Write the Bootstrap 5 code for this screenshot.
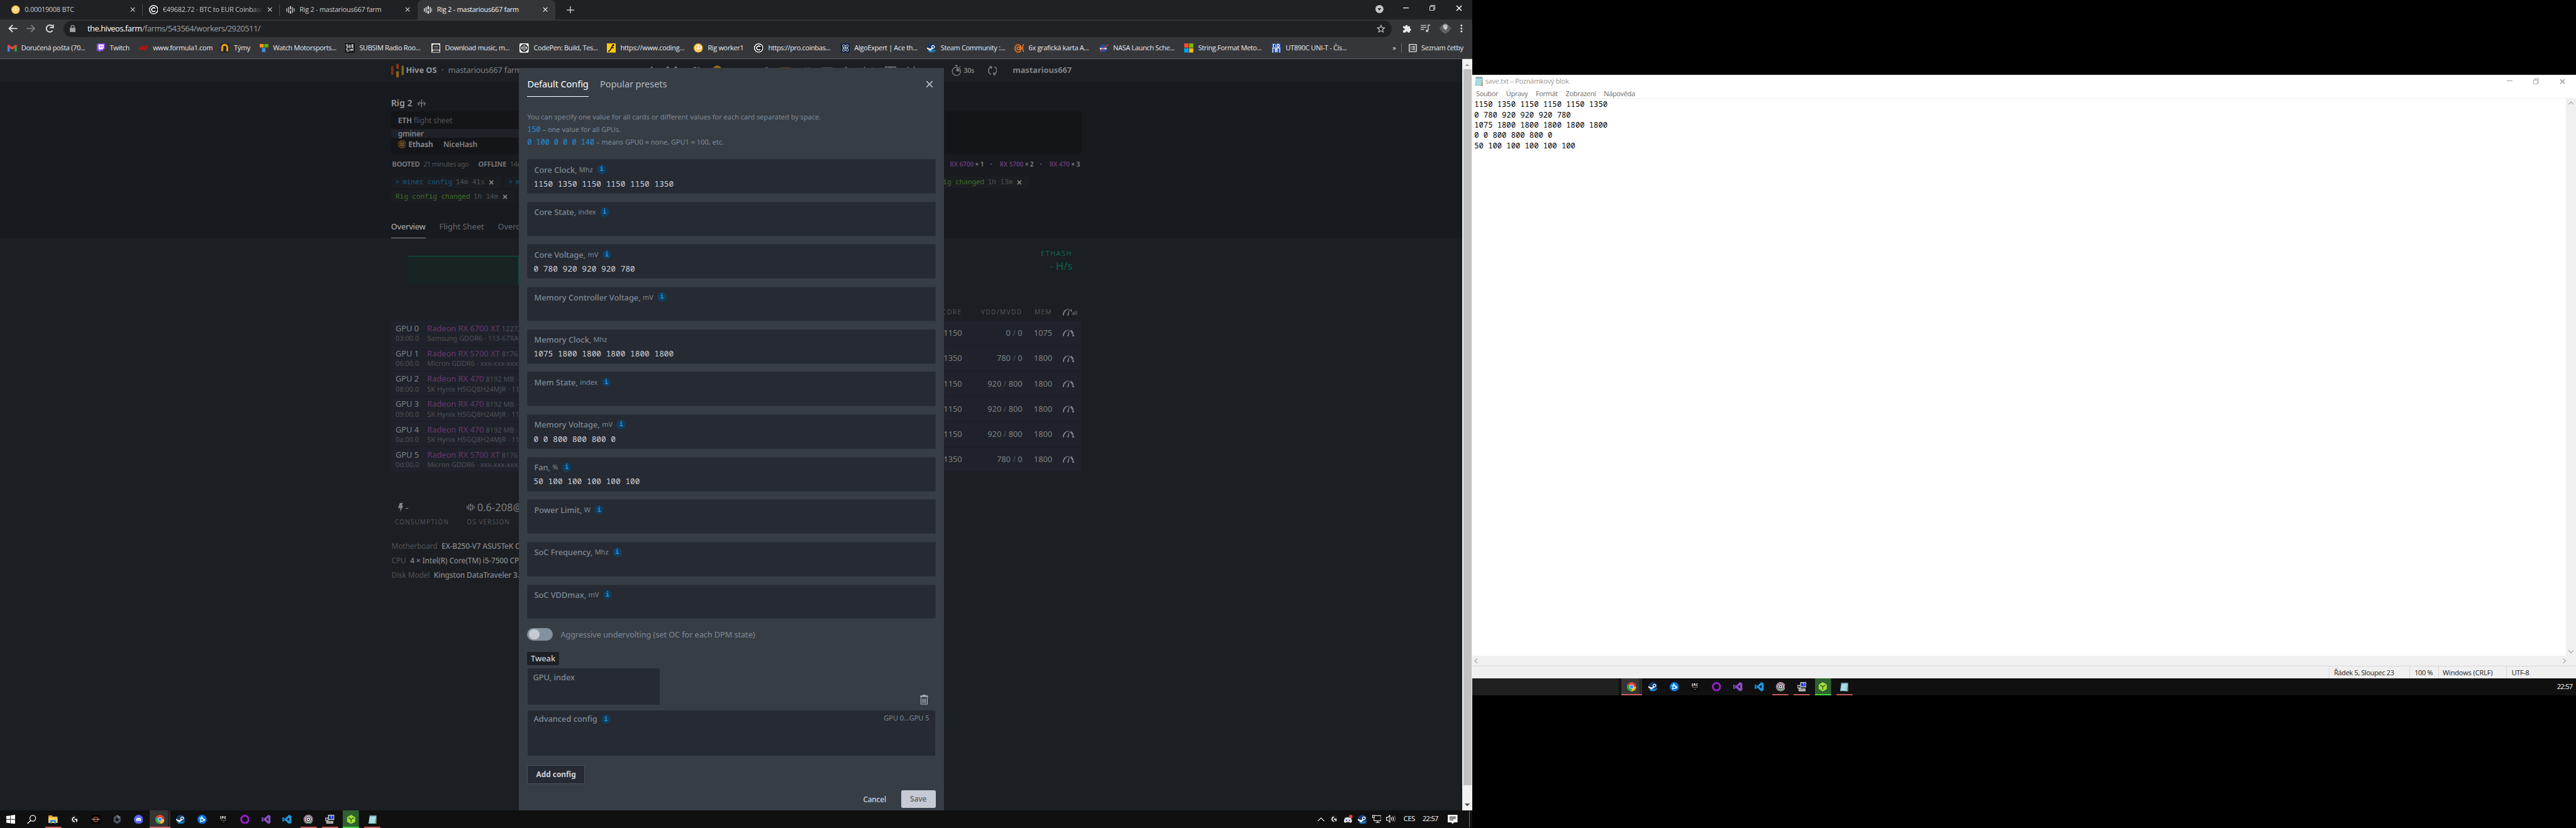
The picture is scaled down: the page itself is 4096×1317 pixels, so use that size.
<!DOCTYPE html>
<html lang="cs">
<head>
<meta charset="utf-8">
<title>Rig 2 - mastarious667 farm</title>
<link href="https://cdn.jsdelivr.net/npm/bootstrap@5.3.0/dist/css/bootstrap.min.css" rel="stylesheet">
<style>
  html, body { background: #000; overflow: hidden; }
  .desktop { zoom: .9142857; width: 4480px; height: 1440px; font: 12px/1.35 "Open Sans", sans-serif; overflow: hidden; }
  .desktop svg { display: block; flex: none; }
  .mon-left { width: 2560px; height: 1440px; }
  .mon-right { width: 1920px; height: 1080px; margin-top: 130px; }
  .seg { letter-spacing: -.3px; white-space: nowrap; }

  /* browser chrome */
  .tabstrip { height: 34px; background: #202124; color: #c6c8cb; padding-left: 9px; }
  .btab { width: 239px; padding: 0 13px 0 11px; height: 34px; position: relative; }
  .btab.sep::after { content: ""; position: absolute; right: 0; top: 8px; height: 19px; width: 1px; background: #4a4c50; }
  .btab.on { background: #35363a; color: #f1f3f4; border-radius: 8px 8px 0 0; width: 240px; }
  .btab svg.fav { margin-right: 8px; }
  .btab .ttl { flex: 1; overflow: hidden; }
  .btab .fade-end { -webkit-mask-image: linear-gradient(90deg, #000 88%, transparent); }
  .wbtn { width: 46px; height: 28px; }
  .toolbar { height: 32px; background: #35363a; color: #e8eaed; }
  .omni { width: 2310px; height: 28px; border-radius: 14px; background: #202124; font-size: 14px; letter-spacing: -.47px; padding: 0 11px 0 11px; color: #9aa0a6; }
  .omni b { font-weight: 400; color: #fff; }
  .omni .lock { margin-right: 21px; }
  .bmbar { height: 37px; background: #35363a; color: #e8eaed; border-bottom: 1px solid #5f6063; padding-left: 13px;
    display: grid; align-items: center; letter-spacing: -.36px; white-space: nowrap;
    grid-template-columns: 154px 74px 142px 69px 149px 149px 154px 151px 152px 105px 150px 150px 152px 147px 149px 152px 210px 15px 13px auto; }
  .bm { display: flex; align-items: center; gap: 8px; }
  .bmsep { width: 1px; height: 16px; background: #6b6d70; }

  /* page below the dialog */
  .page { height: 1307px; background: #1b1e22; position: relative; font-family: "Noto Sans", sans-serif; color: #7e8185; white-space: nowrap; }
  .view { width: 2543px; height: 1307px; overflow: hidden; }
  .inner { margin-left: 680px; width: 1200px; }
  .mono { font-family: "Noto Sans Mono", "DejaVu Sans Mono", monospace; }
  .hhead { height: 40px; background: #1b1e22; border-bottom: 1px solid #191b1f; font-size: 14px; }
  .hhead .tail { margin-left: auto; width: 225px; }
  .dark { height: 272px; background: #171a1e; padding-top: 27px; }
  .dim { color: #505359; }
  .lite { color: #96989b; }
  .rig { height: 20px; font-size: 15.6px; line-height: 20px; }
  .fs { margin-top: 4px; height: 75px; background: #141519; border-radius: 3px; font-size: 13px; letter-spacing: -.15px; }
  .fs > div { padding-left: 12px; }
  .fs .m { height: 16px; width: 600px; background: #1f2128; line-height: 17px; }
  .boot { height: 34px; letter-spacing: -.12px; }
  .violet { color: #66396f; }
  .chip { height: 20px; background: #1a1d21; border-radius: 2px; padding: 0 12px 0 8px; gap: 6px; font-size: 12px; display: flex; align-items: center; }
  .chip b { color: #8b8d90; font: 700 13px "DejaVu Sans", sans-serif; }
  .green { color: #456d28; } .blue { color: #1a5a85; }
  .ptabs { margin-top: 24px; height: 39px; font-size: 14px; gap: 24px; color: #66696e; }
  .ptabs span { line-height: 36px; height: 39px; }
  .ptabs .on { font-weight: 500; letter-spacing: -.3px; color: #a0a2a4; border-bottom: 2px solid #8f9193; }
  .chart { width: 192px; height: 50px; background: #182324; border-top: 1px solid #0d5449; border-right: 2px solid #0f4a42; }
  .teal { color: #0e6654; }
  .ghead { height: 30px; font-size: 11px; letter-spacing: 1.6px; color: #505359; }
  .grow { height: 44px; background: #1f222a; border-bottom: 1px solid #191b1f; font-size: 14px; padding-left: 8px; }
  .gid { width: 55px; } .gsub { font-size: 12px; line-height: 17px; color: #4d5056; }
  .gnm { line-height: 18px; }
  .cr { text-align: right; flex: none; }
  .c1 { width: 60px; } .c2 { width: 105px; } .c3 { width: 52px; } .c4 { width: 50px; padding-left: 18px; }
  .tile { height: 54px; background: #1c1f23; border-radius: 2px; width: 120px; padding-left: 7px; }
  .tile .v { font-size: 18px; line-height: 24px; height: 27px; padding-top: 7px; }
  .tile .k { font-size: 11px; letter-spacing: 1.15px; color: #505359; margin-top: 8px; }
  .spec { font-size: 13px; line-height: 25.5px; letter-spacing: -.15px; color: #505359; padding: 17px 0 0 1px; }
  .spec b { font-weight: 500; color: #86888b; margin-left: 4px; }
  .sbar { width: 17px; background: #f1f1f1; padding: 17px 1px 0 2px; position: relative; }
  .sbar .thumb { background: #c1c1c1; height: 1246px; }
  .sbar svg { position: absolute; left: 4px; }

  /* overclocking dialog */
  .dlg { position: absolute; left: 902px; top: 15px; width: 740px; height: 1292px; background: #373d45; padding: 0 15px 0 15px; color: #7f8a97; }
  .dlg .heads { height: 60px; padding-top: 18px; font-size: 16px; color: #b6bac2; letter-spacing: -.12px; }
  .dlg .heads .on { color: #fff; border-bottom: 1px solid #fff; height: 33px; margin-right: 20px; }
  .help { padding-top: 15px; height: 99px; line-height: 21.5px; }
  .help .mono { color: #238fdb; font-size: 13px; }
  .fld { height: 60px; margin-bottom: 14px; background: #262a32; border: 1px solid #2d3138; border-radius: 2px; padding: 7px 10px 0 11px; font-size: 14px; line-height: 20px; font-weight: 500; }
  .fld small { font-size: 12px; font-weight: 400; }
  .fld .mono { font-size: 14px; font-weight: 400; color: #cdd0d8; line-height: 29px; margin-left: -1px; }
  .inf { width: 16px; height: 16px; border-radius: 50%; background: #103e5e; color: #2596e6; font: 700 11px/16px "DejaVu Sans Mono", monospace; text-align: center; margin-left: 7px; }
  .tog { width: 44px; height: 22px; border-radius: 11px; background: #84919e; padding: 2px 3px; }
  .tog i { display: block; width: 18px; height: 18px; border-radius: 50%; background: #c6cad4; }
  .agg { padding-top: 2px; gap: 14px; font-size: 14px; letter-spacing: -.11px; height: 24px; }
  .tweak { width: 55px; height: 23px; background: #1d2025; color: #cdd0d3; border-radius: 3px; font-size: 14px; font-weight: 500; line-height: 23px; text-align: center; margin-top: 20px; }
  .gbox { width: 229px; height: 63px; background: #262a32; border-radius: 2px; font-size: 14px; font-weight: 500; padding: 6px 9px; margin: 5px 1px 0; }
  .adv { height: 79px; background: #262a32; border-radius: 2px; margin: 10px 1px 0; padding: 6px 10px; font-size: 14px; font-weight: 500; }
  .adv .rng { font-size: 12px; font-weight: 400; }
  .addb { width: 100px; height: 33px; background: #262a32; border: 1px solid #4b515b; color: #cdd0d8; border-radius: 2px; font-size: 13px; font-weight: 700; padding: 0; margin-top: 16px; }
  .foot { margin-top: 11px; gap: 26px; color: #cdd0d8; font-size: 13px; font-weight: 500; letter-spacing: -.2px; }
  .saveb { width: 60px; height: 31px; background: #c6cad4; color: #555a63; border-radius: 3px; font-size: 13px; font-weight: 500; padding: 0; }

  /* taskbars */
  .tbar { height: 30px; background: #101010; color: #fff; }
  .tk { width: 37px; height: 30px; display: flex; justify-content: center; align-items: center; }
  .tk.run { background: linear-gradient(#d96363, #d96363) no-repeat center bottom / 28px 2px; }
  .tk.cur { width: 36px; margin-left: 1px; background: linear-gradient(#d96363, #d96363) no-repeat left bottom / 100% 2px, linear-gradient(90deg, #353535 32px, #181818 32px, #181818 33px, #2b2b2b 33px); }
  .tk.grn { background: linear-gradient(#43e53a, #43e53a) no-repeat center bottom / 28px 2px, linear-gradient(#2f6130, #2f6130) no-repeat center / 28px 30px; }
  .vsp { color: #8a4fc4; } .vsb { color: #1f96dc; }
  .tray { gap: 9px; }
  .clk { letter-spacing: -.7px; }
  .peek { width: 1px; height: 28px; background: #777; margin: 0 4px 0 11px; }
  .blank { width: 255px; height: 30px; background: #202020; margin-right: 4px; }

  /* notepad */
  .np { height: 1050px; background: #fff; }
  .np .cap { height: 23px; padding-left: 4px; color: #999; }
  .np .menu { height: 19px; border-bottom: 1px solid #eee; color: #6d6d6d; letter-spacing: -.37px; padding-left: 7px; gap: 14px; line-height: 19px; }
  .np pre { margin: 0; flex: 1; color: #000; font: 13.33px/18px "Noto Sans Mono", "DejaVu Sans Mono", monospace; padding: 1px 0 0 4px; overflow: hidden; }
  .np .vs { width: 17px; background: #f0f0f0; padding: 4px 0; }
  .np .hs { height: 17px; background: #f0f0f0; padding: 0 17px 0 4px; }
  .np .stat { height: 22px; background: #f0f0f0; border-top: 1px solid #d7d7d7; color: #222; letter-spacing: -.37px; }
  .stat span { border-left: 1px solid #d7d7d7; padding-left: 8px; line-height: 21px; }
  .stat .s1 { width: 140px; } .stat .s2 { width: 50px; } .stat .s3 { width: 119px; padding-left: 7px; letter-spacing: -.12px; } .stat .s4 { width: 121px; }
</style>
<script src="https://cdn.jsdelivr.net/npm/bootstrap@5.3.0/dist/js/bootstrap.bundle.min.js"></script>
</head>
<body>
<svg width="0" height="0" class="position-absolute">
  <defs>
    <symbol id="nh" viewBox="0 0 16 16"><circle cx="8" cy="8" r="8" fill="#fbb52c"/><circle cx="8" cy="8" r="6" fill="#fdf3dc"/><path d="M5.500 4v4M10.500 4v4" stroke="#fbb52c" stroke-width="2"/><path d="M4 9c1 4 7 4 8 0" fill="none" stroke="#fbb52c" stroke-width="1.600"/></symbol>
    <symbol id="cb" viewBox="0 0 16 16"><circle cx="8" cy="8" r="8" fill="#fff"/><circle cx="8" cy="8" r="6.400" fill="#111"/><path d="M10.800 6.200a3.400 3.400 0 1 0 0 3.600" fill="none" stroke="#fff" stroke-width="2"/></symbol>
    <symbol id="hv" viewBox="0 0 16 16"><path d="M1 5v6M4.200 2.500v11M11.800 2.500v11M15 5v6" stroke="currentColor" stroke-width="1.600"/><path d="M8 1v6M8 9v6" stroke="currentColor" stroke-width="2.400"/></symbol>
    <symbol id="x" viewBox="0 0 10 10"><path d="M1 1l8 8M9 1l-8 8" stroke="currentColor" stroke-width="1.500"/></symbol>
    <symbol id="rst" viewBox="0 0 10 10"><path d="M.5 2.500h7v7h-7zM2.500 2.500v-2h7v7h-2" fill="none" stroke="currentColor"/></symbol>
    <symbol id="win" viewBox="0 0 16 16"><path d="M0 2.300l6.800-1v6.200H0zM7.600 1.200L16 0v7.500H7.600zM0 8.400h6.800v6.300L0 13.700zM7.600 8.400H16V16l-8.400-1.200z" fill="#fff"/></symbol>
    <symbol id="srch" viewBox="0 0 16 16"><circle cx="10" cy="6" r="5" fill="none" stroke="#fff" stroke-width="1.400"/><path d="M6.300 9.800L.8 15.400" stroke="#fff" stroke-width="1.500"/></symbol>
    <symbol id="fold" viewBox="0 0 16 16"><path d="M0 1h6l1.500 2H16v11H0z" fill="#e0a42e"/><path d="M0 5h16v9H0z" fill="#ffd667"/><path d="M3 15V9h10v6h-3v-3H6v3z" fill="#2f8fe0"/></symbol>
    <symbol id="lg" viewBox="0 0 16 16"><circle cx="8" cy="8" r="8" fill="#1a1a1a"/><path d="M8.500 4.200A3.800 3.800 0 1 0 8.500 12M8.300 8H12v4" fill="none" stroke="#fff" stroke-width="1.900"/></symbol>
    <symbol id="ryz" viewBox="0 0 16 16"><rect width="16" height="16" fill="#000"/><circle cx="8" cy="8" r="4" fill="none" stroke="#c1521c" stroke-width="1.600"/><path d="M1 8h14" stroke="#bbb" stroke-width="1.600" stroke-dasharray="1.600 .6"/></symbol>
    <symbol id="ark" viewBox="0 0 16 16"><path d="M8 0l6 4v8l-6 4-6-4V4z" fill="#4d555c"/><path d="M8 4.500l2.500 1.800v3.400L8 11.500 5.500 9.700V6.300z" fill="#101010"/><path d="M8 0l6 4-5 3z" fill="#7b848b"/></symbol>
    <symbol id="dsc" viewBox="0 0 16 16"><path d="M3 4.300C6 3 10 3 13 4.300c1.500 2.300 2 5 1.800 7.300-1.200.9-2.400 1.300-3.300 1.400l-.8-1.300H5.300L4.500 13c-1-.1-2.200-.5-3.300-1.400C1 9.300 1.500 6.600 3 4.300z" fill="currentColor"/><circle cx="5.500" cy="8.600" r="1.300" fill="#4653d8"/><circle cx="10.500" cy="8.600" r="1.300" fill="#4653d8"/></symbol>
    <symbol id="chr" viewBox="0 0 16 16"><circle cx="8" cy="8" r="8" fill="#e14434"/><path d="M8 8L1.100 4A8 8 0 0 0 8 16z" fill="#2da94f"/><path d="M8 8h8a8 8 0 0 1-8 8l-1-.1 3.500-6z" fill="#fbc116"/><circle cx="8" cy="8" r="3.700" fill="#fff"/><circle cx="8" cy="8" r="2.900" fill="#4285f4"/></symbol>
    <symbol id="stm" viewBox="0 0 16 16"><circle cx="8" cy="8" r="8" fill="#143a6b"/><path d="M1.500 12.500A8 8 0 0 0 15.500 11z" fill="#1b7fc0"/><circle cx="10.500" cy="6" r="2.400" fill="none" stroke="#fff" stroke-width="1.300"/><path d="M0 8l5.500 3.200L10 8" fill="none" stroke="#fff" stroke-width="2.200"/><circle cx="5.500" cy="11" r="1.900" fill="#fff"/></symbol>
    <symbol id="bnet" viewBox="0 0 16 16"><circle cx="8" cy="8" r="8" fill="#0a74e0"/><path d="M5 13C5.500 8 6 5 7 3c3 3 4 6 4.500 8M3 6.500c4-.5 7 0 10 2-2 2-5 3-8.500 3" fill="none" stroke="#dff" stroke-width="1.300"/></symbol>
    <symbol id="epic" viewBox="0 0 16 16"><path d="M1.500 0h13v13L8 16l-6.500-3z" fill="#050505"/><path d="M4.500 2.500H3v4.500h1.500M3 4.700h1.300M6 7V2.500h1.200v2.300H6M9 2.500V7M12.500 2.500H11V7h1.500" stroke="#fff" fill="none"/><path d="M3 9.500h10M6 12.500h4" stroke="#888"/></symbol>
    <symbol id="ring" viewBox="0 0 16 16"><circle cx="8" cy="8" r="6.400" fill="none" stroke="#a01fd8" stroke-width="3"/></symbol>
    <symbol id="vs" viewBox="0 0 16 16"><path d="M11.500 0L16 2v12l-4.500 2-7-6.500L1.500 12 0 11V5l1.500-1 3 2.500zM12 5L8 8l4 3zM2 6v4l2-2z" fill="currentColor" fill-rule="evenodd"/></symbol>
    <symbol id="cd" viewBox="0 0 16 16"><circle cx="8" cy="8" r="8" fill="#ddd"/><circle cx="8" cy="8" r="6.500" fill="none" stroke="#8d3d78" stroke-width="1.500"/><path d="M3 12a6.500 6.500 0 0 0 10 0" stroke="#3ba55c" stroke-width="1.500" fill="none"/><circle cx="8" cy="8" r="3.600" fill="#fff" stroke="#222" stroke-width="1.200"/><circle cx="8" cy="8" r="1.300" fill="#222"/></symbol>
    <symbol id="pcs" viewBox="0 0 16 16"><path d="M5 0h11v9H5z" fill="#d4d4d4"/><path d="M6.500 1.500h8v6h-8z" fill="#1c33c8"/><path d="M9 1.500h3v6z" fill="#7fa4ff"/><path d="M0 5h6v6H0z" fill="#b5b5b5"/><path d="M1 6.500h4v3H1z" fill="#345"/><path d="M2 11h12v5H2z" fill="#c9c9c9"/><path d="M3 13h9" stroke="#555"/></symbol>
    <symbol id="cube" viewBox="0 0 16 16"><path d="M8 0l7 4v8l-7 4-7-4V4z" fill="#a5dc35"/><path d="M3.500 5L8 8l4.500-3M8 8v5" stroke="#2f6130" stroke-width="1.500" fill="none"/></symbol>
    <symbol id="note" viewBox="0 0 16 16"><path d="M3 1.500h12L13 15.500H1z" fill="#8fd0dc"/><path d="M15 1.500V16H8l5-1z" fill="#a78b5a"/><path d="M3.500 0v2.500M6 0v2.500M8.500 0v2.500M11 0v2.500M13.500 0v2.500" stroke="#456"/><path d="M3.500 5h9M3 7.500h9M2.800 10h9M2.500 12.500h9" stroke="#c9edf2"/></symbol>
    <symbol id="gau" viewBox="0 0 20 14"><path d="M1 12.500C1 6 5 2 10 2" fill="none" stroke="currentColor" stroke-width="1.400"/><path d="M1 12.500C1 8 3 5 5 3.800" fill="none" stroke="currentColor" stroke-width="2"/><path d="M13.500 3c2.500 1.500 4.500 5 4.500 10" fill="none" stroke="currentColor" stroke-width="3" stroke-dasharray="7.500 .8"/><path d="M12.300 0L7.500 12.500l2.300.9z" fill="currentColor"/></symbol>
    <symbol id="ms" viewBox="0 0 16 16"><path d="M0 0h7.500v7.500H0z" fill="#f25022"/><path d="M8.500 0H16v7.500H8.500z" fill="#7fba00"/><path d="M0 8.500h7.500V16H0z" fill="#00a4ef"/><path d="M8.500 8.500H16V16H8.500z" fill="#ffb900"/></symbol>
  </defs>
</svg>

<div class="desktop d-flex align-items-start">
  <div class="mon-left d-flex flex-column flex-shrink-0">

    <div class="tabstrip d-flex seg">
      <div class="btab sep d-flex align-items-center"><svg class="fav" width="15" height="16"><use href="#nh"/></svg><span class="ttl">0.00019008 BTC</span><svg width="9" height="9"><use href="#x"/></svg></div>
      <div class="btab sep d-flex align-items-center"><svg class="fav" width="16" height="16"><use href="#cb"/></svg><span class="ttl fade-end">€49682.72 · BTC to EUR Coinbase</span><svg width="9" height="9" class="ms-2"><use href="#x"/></svg></div>
      <div class="btab d-flex align-items-center"><svg class="fav" width="15" height="15"><use href="#hv"/></svg><span class="ttl">Rig 2 - mastarious667 farm</span><svg width="9" height="9"><use href="#x"/></svg></div>
      <div class="btab on d-flex align-items-center"><svg class="fav" width="15" height="15"><use href="#hv"/></svg><span class="ttl">Rig 2 - mastarious667 farm</span><svg width="9" height="9"><use href="#x"/></svg></div>
      <div class="d-flex align-items-center ms-3 ps-1"><svg width="13" height="13" viewBox="0 0 13 13"><path d="M6.500 0v13M0 6.500h13" stroke="#c6c8cb" stroke-width="1.600"/></svg></div>
      <div class="ms-auto d-flex align-items-start">
        <div class="d-flex justify-content-center align-items-center wbtn pt-1"><svg width="14" height="14" viewBox="0 0 14 14"><circle cx="7" cy="7" r="7" fill="#c4c6c9"/><path d="M4 5.500h6L7 9.500z" fill="#202124"/></svg></div>
        <div class="d-flex justify-content-center align-items-center wbtn"><svg width="10" height="2"><rect width="10" height="1.300" fill="#fff"/></svg></div>
        <div class="d-flex justify-content-center align-items-center wbtn text-white"><svg width="10" height="10"><use href="#rst"/></svg></div>
        <div class="d-flex justify-content-center align-items-center wbtn text-white"><svg width="11" height="11"><use href="#x"/></svg></div>
      </div>
    </div>

    <div class="toolbar d-flex align-items-center">
      <svg width="110" height="16" viewBox="0 0 110 16" fill="none" stroke-width="2"><path d="M30 8H16M22 2l-6 6 6 6" stroke="#e8eaed"/><path d="M46 8h14M54 2l6 6-6 6" stroke="#7d7f83"/><path d="M91.500 11.500A6 6 0 1 1 91 4" stroke="#e8eaed"/><path d="M92.500 1v5.500H87" stroke="#e8eaed"/></svg>
      <div class="omni d-flex align-items-center">
        <svg width="10" height="12" viewBox="0 0 10 12" class="lock"><rect y="4.500" width="10" height="7.500" rx="1" fill="#9aa0a6"/><path d="M2.300 5V3a2.700 2.700 0 0 1 5.400 0v2" fill="none" stroke="#9aa0a6" stroke-width="1.400"/></svg>
        <span><b>the.hiveos.farm</b>/farms/543564/workers/2920511/</span>
        <svg class="ms-auto" width="15" height="15" viewBox="0 0 16 16"><path d="M8 1.500l1.900 4.300 4.700.4-3.600 3.100 1.100 4.600L8 11.500l-4.100 2.400L5 9.300 1.400 6.200l4.700-.4z" fill="none" stroke="#c4c7cb" stroke-width="1.400"/></svg>
      </div>
      <div class="d-flex align-items-center ms-auto me-3 gap-3">
        <svg width="16" height="16" viewBox="0 0 16 16"><path d="M1 4h4a2 2 0 1 1 4 0h4v4a2 2 0 1 1 0 4v3H9.500a2 2 0 1 0-4 0H1v-4a2 2 0 1 0 0-3.500z" fill="#e8eaed"/></svg>
        <svg width="17" height="14" viewBox="0 0 17 14"><path d="M0 1.500h10M0 5h10M0 8.500h6" stroke="#c9cbce" stroke-width="1.600"/><path d="M16.500 1H13v9" stroke="#c9cbce" stroke-width="1.600" fill="none"/><circle cx="11" cy="11" r="2.300" fill="#c9cbce"/></svg>
        <svg width="20" height="18" viewBox="0 0 20 18"><circle cx="10" cy="9" r="8" fill="#5c5f62"/><path d="M0 9l10-9 10 9-10 9z" fill="none" stroke="#777"/><circle cx="10" cy="6" r="4" fill="#b9bcbd"/><path d="M8 7l3 6 1-6z" fill="#ddd"/></svg>
        <svg width="4" height="14" viewBox="0 0 4 14" fill="#e8eaed"><circle cx="2" cy="2" r="1.600"/><circle cx="2" cy="7" r="1.600"/><circle cx="2" cy="12" r="1.600"/></svg>
      </div>
    </div>

    <div class="bmbar">
      <div class="bm"><svg width="16" height="12" viewBox="0 0 16 12"><path d="M0 12V1l3.500 2.500V12z" fill="#4285f4"/><path d="M16 12V1l-3.500 2.500V12z" fill="#34a853"/><path d="M0 3V1q1-2 3.500 0L8 4.500 12.500 1Q15-1 16 1v2L8 9z" fill="#ea4335"/></svg>Doručená pošta (70...</div>
      <div class="bm"><svg width="16" height="16" viewBox="0 0 16 16"><path d="M1 2l2-2h12v9l-4 4H8l-3 3v-3H1z" fill="#9146ff"/><path d="M4 2h9v6l-2 2H8l-2 2v-2H4z" fill="#fff"/><path d="M7.500 4v3M10.500 4v3" stroke="#9146ff" stroke-width="1.400"/></svg>Twitch</div>
      <div class="bm"><svg width="17" height="8" viewBox="0 0 17 8"><path d="M0 8l4-6q1-2 4-2h5l-1.500 2H8Q6.500 2 5.500 3.500L2.500 8zM4 8l2-3.500q1-1.500 2-1.500h3L9.500 5H8L6.500 8zM14 0h3l-5 8H9z" fill="#e10600"/></svg>www.formula1.com</div>
      <div class="bm"><svg width="16" height="16" viewBox="0 0 16 16"><rect width="16" height="16" fill="#22222a"/><path d="M3.500 14V7a4.500 4.500 0 0 1 9 0v7" fill="none" stroke="#f5a80f" stroke-width="3.200"/></svg>Týmy</div>
      <div class="bm"><svg width="15" height="14" viewBox="0 0 15 14"><path d="M0 0h7v6H0z" fill="#f7931e"/><path d="M8 0h7v6H8z" fill="#56b400"/><path d="M4 7h6v7H4z" fill="#3b8eea"/></svg>Watch Motorsports...</div>
      <div class="bm"><svg width="16" height="16" viewBox="0 0 16 16"><rect width="16" height="16" fill="#000"/><path d="M5 2H2v2.500h3V7H2M7 2v5h2V2M11.500 2h2v5h-2zM11.500 4.500h2M5 9H2v2.500h3V14H2M7.500 9v5M10 14V9l1.500 3L13.500 9v5" stroke="#ddd" fill="none" stroke-width="1.200"/></svg>SUBSIM Radio Roo...</div>
      <div class="bm"><svg width="16" height="16" viewBox="0 0 16 16"><rect width="16" height="16" fill="#f3f3f3"/><path d="M2 11V4q0-2 2-2h8q2 0 2 2v7z" fill="#222"/><path d="M4 5h8M4 8h8" stroke="#bbb"/><path d="M3 12h10l2 3H1z" fill="#333"/></svg>Download music, m...</div>
      <div class="bm"><svg width="16" height="16" viewBox="0 0 16 16"><rect width="16" height="16" rx="2" fill="#fff"/><circle cx="8" cy="8" r="6.700" fill="#111"/><path d="M8 3.500l4.500 3v3L8 12.500l-4.500-3v-3zM3.500 6.500L8 9.500l4.500-3M3.500 9.500L8 6.500l4.500 3M8 3.500v3M8 9.500v3" fill="none" stroke="#fff"/></svg>CodePen: Build, Tes...</div>
      <div class="bm"><svg width="16" height="16" viewBox="0 0 16 16"><rect width="16" height="16" fill="#ffcc10"/><path d="M2 14c4-1 5-3 6-7l2-3M8 7l4 1" stroke="#111" stroke-width="1.800" fill="none"/><circle cx="11" cy="3" r="1.700"/></svg>https://www.coding...</div>
      <div class="bm"><svg width="16" height="16"><use href="#nh"/></svg>Rig worker1</div>
      <div class="bm"><svg width="16" height="16"><use href="#cb"/></svg>https://pro.coinbas...</div>
      <div class="bm"><svg width="16" height="16" viewBox="0 0 16 16"><rect width="16" height="16" fill="#0d2240"/><g fill="none" stroke="#dfe7f0"><ellipse cx="8" cy="8" rx="7" ry="2.800" transform="rotate(50 8 8)"/><ellipse cx="8" cy="8" rx="7" ry="2.800" transform="rotate(-50 8 8)"/></g><circle cx="8" cy="8" r="1.300" fill="#fff"/></svg>AlgoExpert | Ace th...</div>
      <div class="bm"><svg width="16" height="16"><use href="#stm"/></svg>Steam Community :...</div>
      <div class="bm"><svg width="17" height="15" viewBox="0 0 17 15" fill="none" stroke="#f47b20" stroke-width="1.700"><path d="M11 11.500A5.500 6.500 0 1 1 12 7v2q-1 2-2 0V4"/><circle cx="7" cy="7.500" r="2.500"/><path d="M16 .5q-3.500 6 0 13"/></svg>6x grafická karta A...</div>
      <div class="bm"><svg width="17" height="15" viewBox="0 0 17 15"><circle cx="8" cy="7.500" r="6.700" fill="#1f4fa0"/><path d="M2 8h12" stroke="#fff" stroke-width="2.500" stroke-dasharray="2.400 .7"/><path d="M2 13Q8 7 17 1" stroke="#e0342a" stroke-width="1.500" fill="none"/></svg>NASA Launch Sche...</div>
      <div class="bm"><svg width="16" height="16"><use href="#ms"/></svg>String.Format Meto...</div>
      <div class="bm"><svg width="16" height="16" viewBox="0 0 16 16"><path d="M0 0h16v16H0z" fill="#264f9c"/><path d="M3 1.500v5M2 1.500h3M7.500 1.500v5M10.500 1.500v5h2q2-2.500 0-5z" stroke="#fff" fill="none" stroke-width="1.300"/><path d="M2 9v7M14 9v7M1 8h14M6.500 10v4.500h3v-4.500zM6.500 12h3" stroke="#fff" fill="none" stroke-width="1.300"/></svg>UT890C UNI-T - Čís...</div>
      <div class="bm">»</div>
      <div class="bmsep"></div>
      <div class="bm"><svg width="14" height="14" viewBox="0 0 14 14" fill="none" stroke="#e8eaed" stroke-width="1.500"><rect x=".7" y=".7" width="12.600" height="12.600" rx="1"/><path d="M3 4.500h1.500M6 4.500h5M3 7h1.500M6 7h5M3 9.500h1.500M6 9.500h5"/></svg>Seznam četby</div>
    </div>

    <div class="page d-flex">
      <div class="view">
        <div class="hhead">
          <div class="inner d-flex align-items-center h-100">
            <svg width="22" height="24" viewBox="0 0 22 24" class="me-1"><path d="M2 4.500v15" stroke="#82300f" stroke-width="4"/><path d="M11 .5v9" stroke="#8a3510" stroke-width="4.500"/><path d="M11 13.500V24" stroke="#8d6410" stroke-width="4.500"/><path d="M20 4v16" stroke="#7d6c12" stroke-width="4"/></svg>
            <b class="lite">Hive OS</b><span class="px-2">·</span><span style="letter-spacing:-.28px">mastarious667 farm</span>
            <svg width="670" height="24" viewBox="0 0 670 24" fill="#777a7e" class="ms-4">
              <path d="M200.500 6h2v6h-2zM195 8l2 3M208 8l-2 3M228 11V9l-2 0 3.500-4 3.500 4h-2v2zM242 11V9l-2 0 3.500-4 3.500 4h-2v2z" stroke="#777a7e"/>
              <path d="M270 11q2-5 9-5v5zM281 11V8q2-4 4 0v3z"/><path d="M308 11a7.500 7.500 0 0 1 15 0z" fill="#9b6a10"/><path d="M346 9h3v2h-3zM394 11q3-4 9-5v5zM499 11h-1v-4h18v4h-2V9h-15z"/>
              <path d="M423 11V9q0-2 2-2h17q2 0 2 2v2z" fill="#9b6a10"/><path d="M470 7l-1 4M475 7l-1 4M536 11q2-4 5-5M571 6l3 5M586 7v4M608 11V6h18v5M614 11V8h7v3M646 6l6 5M659 5l-4 6" stroke="#777a7e" stroke-width="1.600" fill="none"/>
            </svg>
            <div class="tail d-flex align-items-center flex-shrink-0">
              <svg width="17" height="20" viewBox="0 0 17 20" fill="none" stroke="#7c7f83" stroke-width="1.500"><circle cx="8.500" cy="11.500" r="7.200"/><path d="M6 1.200h5M8.500 1.500v3M14 3l1.500 1.500"/><path d="M8.500 11.500V6a5.500 5.500 0 0 1 5.500 5.500z" fill="#7c7f83" stroke="none"/></svg>
              <span class="fw-semibold" style="font-size:12px;letter-spacing:-.5px;margin:0 24px 0 4px">30s</span>
              <svg width="16" height="18" viewBox="0 0 16 18" fill="none" stroke="#7c7f83" stroke-width="1.700"><path d="M5 15.500A6.800 6.800 0 0 1 5 3M11 2.500A6.800 6.800 0 0 1 11 15"/><path d="M3 1.500l3.500 1L5.500 6M13 16.500l-3.500-1 1-3.500"/></svg>
              <b style="margin-left:27px">mastarious667</b>
            </div>
          </div>
        </div>

        <div class="dark">
          <div class="inner">
            <div class="rig lite fw-semibold d-flex align-items-center">Rig 2 <svg class="ms-2" width="16" height="14" viewBox="0 0 16 14" fill="none" stroke="#7c7f83" stroke-width="1.400"><path d="M8 0v4M8 6v8M5 4L1 8M4 7L2 11M11 4l4 4M12 7l2 4M5.500 7.500L8 5l2.500 2.500M5 10h.5M10.500 10h.5"/></svg></div>
            <div class="fs">
              <div style="line-height:31px;height:30px"><b>ETH</b> <span class="dim">flight sheet</span></div>
              <div class="m fw-semibold">gminer</div>
              <div class="d-flex align-items-center" style="height:22px"><svg width="14" height="14" viewBox="0 0 14 14" class="me-1"><circle cx="7" cy="7" r="6.300" fill="none" stroke="#6f5518" stroke-width="1.400"/><circle cx="7" cy="7" r="4.500" fill="#4c3e1c"/><path d="M5 4v3M9 4v3M4 8.500q3 3 6 0" stroke="#937026" fill="none"/></svg><b>Ethash</b><span class="fw-semibold" style="margin-left:18px">NiceHash</span></div>
            </div>
            <div class="boot d-flex align-items-center ps-0">
              <span class="fw-semibold" style="margin-left:2px">BOOTED</span><span class="dim" style="margin:0 17px 0 6px;letter-spacing:-.6px">21 minutes ago</span><span class="fw-semibold">OFFLINE</span><span class="dim" style="margin-left:6px">14m</span>
              <span class="ms-auto fw-semibold" style="font-size:11px;padding-right:2px"><span class="violet">RX 6700</span> × 1 &nbsp;&nbsp; · &nbsp;&nbsp;&nbsp; <span class="violet">RX 5700</span> × 2 &nbsp;&nbsp; · &nbsp;&nbsp;&nbsp; <span class="violet">RX 470</span> × 3</span>
            </div>
            <div class="d-flex mono" style="margin-top:4px"><div class="chip"><span class="blue">&gt;<span style="margin-left:5px">miner config</span></span><span class="dim">14m 41s</span><b>×</b></div><div class="chip" style="margin-left:5px"><span class="blue">&gt;<span style="margin-left:5px">mi</span></span></div>
              <div class="chip ms-auto" style="margin-right:90px"><span class="green">fig changed</span><span class="dim">1h 13m</span><b>×</b></div></div>
            <div class="d-flex mono" style="margin-top:5px"><div class="chip"><span class="green">Rig config changed</span><span class="dim">1h 14m</span><b>×</b></div><div class="chip" style="margin-left:6px"></div></div>
            <div class="ptabs d-flex"><span class="on">Overview</span><span>Flight Sheet</span><span>Overc</span></div>
          </div>
        </div>

        <div class="inner">
          <div class="d-flex justify-content-between" style="padding:30px 15px 0 30px;height:113px">
            <div class="chart"></div>
            <div class="teal text-end"><div style="letter-spacing:1.600px;margin-top:-12px;font-size:12px">ETHASH</div><div style="font-size:18px;line-height:26px">- H/s</div></div>
          </div>
          <div class="ghead d-flex align-items-center"><div class="cr c1 ms-auto">CORE</div><div class="cr c2">VDD/MVDD</div><div class="cr c3">MEM</div><div class="c4 d-flex align-items-center" style="letter-spacing:0"><svg width="16" height="14" viewBox="0 0 16 14" style="color:#7c7f83;overflow:hidden"><use href="#gau" width="20" height="14"/></svg><span style="font-size:9px;margin-top:3px;color:#7c7f83">all</span></div></div>

          <div class="grow d-flex align-items-center"><div class="gid"><div class="gnm">GPU 0</div><div class="gsub">03:00.0</div></div><div><div class="gnm"><span class="violet">Radeon RX 6700 XT</span> <span class="gsub">12272</span></div><div class="gsub">Samsung GDDR6 · 113-67XA0</div></div><div class="cr c1 ms-auto">1150</div><div class="cr c2">0<span class="dim"> / </span>0</div><div class="cr c3">1075</div><div class="c4"><svg width="20" height="14"><use href="#gau"/></svg></div></div>
          <div class="grow d-flex align-items-center"><div class="gid"><div class="gnm">GPU 1</div><div class="gsub">06:00.0</div></div><div><div class="gnm"><span class="violet">Radeon RX 5700 XT</span> <span class="gsub">8176</span></div><div class="gsub">Micron GDDR6 · xxx-xxx-xxx</div></div><div class="cr c1 ms-auto">1350</div><div class="cr c2">780<span class="dim"> / </span>0</div><div class="cr c3">1800</div><div class="c4"><svg width="20" height="14"><use href="#gau"/></svg></div></div>
          <div class="grow d-flex align-items-center"><div class="gid"><div class="gnm">GPU 2</div><div class="gsub">08:00.0</div></div><div><div class="gnm"><span class="violet">Radeon RX 470</span> <span class="gsub">8192 MB ·</span></div><div class="gsub">SK Hynix H5GQ8H24MJR · 11</div></div><div class="cr c1 ms-auto">1150</div><div class="cr c2">920<span class="dim"> / </span>800</div><div class="cr c3">1800</div><div class="c4"><svg width="20" height="14"><use href="#gau"/></svg></div></div>
          <div class="grow d-flex align-items-center"><div class="gid"><div class="gnm">GPU 3</div><div class="gsub">09:00.0</div></div><div><div class="gnm"><span class="violet">Radeon RX 470</span> <span class="gsub">8192 MB ·</span></div><div class="gsub">SK Hynix H5GQ8H24MJR · 11</div></div><div class="cr c1 ms-auto">1150</div><div class="cr c2">920<span class="dim"> / </span>800</div><div class="cr c3">1800</div><div class="c4"><svg width="20" height="14"><use href="#gau"/></svg></div></div>
          <div class="grow d-flex align-items-center"><div class="gid"><div class="gnm">GPU 4</div><div class="gsub">0a:00.0</div></div><div><div class="gnm"><span class="violet">Radeon RX 470</span> <span class="gsub">8192 MB ·</span></div><div class="gsub">SK Hynix H5GQ8H24MJR · 11</div></div><div class="cr c1 ms-auto">1150</div><div class="cr c2">920<span class="dim"> / </span>800</div><div class="cr c3">1800</div><div class="c4"><svg width="20" height="14"><use href="#gau"/></svg></div></div>
          <div class="grow d-flex align-items-center"><div class="gid"><div class="gnm">GPU 5</div><div class="gsub">0d:00.0</div></div><div><div class="gnm"><span class="violet">Radeon RX 5700 XT</span> <span class="gsub">8176</span></div><div class="gsub">Micron GDDR6 · xxx-xxx-xxx</div></div><div class="cr c1 ms-auto">1350</div><div class="cr c2">780<span class="dim"> / </span>0</div><div class="cr c3">1800</div><div class="c4"><svg width="20" height="14"><use href="#gau"/></svg></div></div>

          <div class="d-flex" style="margin-top:44px;gap:5px">
            <div class="tile"><div class="v d-flex align-items-center" style="padding-left:5px"><svg width="9" height="16" viewBox="0 0 9 16" class="me-1"><path d="M3 0h5L6.500 5H9L3 16l1-7H0z" fill="#84868a"/></svg>-</div><div class="k">CONSUMPTION</div></div>
            <div class="tile"><div class="v d-flex align-items-center"><svg width="14" height="15" class="me-1"><use href="#hv"/></svg>0.6-208@</div><div class="k">OS VERSION</div></div>
          </div>
          <div class="spec"><div>Motherboard <b>EX-B250-V7 ASUSTeK C</b></div><div>CPU <b>4 × Intel(R) Core(TM) i5-7500 CP</b></div><div>Disk Model <b>Kingston DataTraveler 3.</b></div></div>
        </div>
      </div>

      <div class="sbar"><svg width="9" height="5" viewBox="0 0 9 5" style="top:7px"><path d="M0 5l4.500-5L9 5z" fill="#a3a3a3"/></svg><div class="thumb"></div><svg width="9" height="5" viewBox="0 0 9 5" style="bottom:7px"><path d="M0 0l4.500 5L9 0z" fill="#505050"/></svg></div>

      <div class="dlg">
        <div class="heads d-flex align-items-start"><span class="on">Default Config</span><span>Popular presets</span><svg width="13" height="13" class="ms-auto mt-1 me-1"><use href="#x"/></svg></div>
        <div class="help"><div>You can specify one value for all cards or different values for each card separated by space.</div><div><span class="mono">150</span> – one value for all GPUs.</div><div><span class="mono">0 100 0 0 0 140</span> – means GPU0 = none, GPU1 = 100, etc.</div></div>

        <div class="fld"><div class="d-flex align-items-center">Core Clock,&nbsp;<small>Mhz</small><span class="inf">i</span></div><div class="mono">1150 1350 1150 1150 1150 1350</div></div>
        <div class="fld"><div class="d-flex align-items-center">Core State,&nbsp;<small>index</small><span class="inf">i</span></div></div>
        <div class="fld"><div class="d-flex align-items-center">Core Voltage,&nbsp;<small>mV</small><span class="inf">i</span></div><div class="mono">0 780 920 920 920 780</div></div>
        <div class="fld"><div class="d-flex align-items-center">Memory Controller Voltage,&nbsp;<small>mV</small><span class="inf">i</span></div></div>
        <div class="fld"><div class="d-flex align-items-center">Memory Clock,&nbsp;<small>Mhz</small></div><div class="mono">1075 1800 1800 1800 1800 1800</div></div>
        <div class="fld"><div class="d-flex align-items-center">Mem State,&nbsp;<small>index</small><span class="inf">i</span></div></div>
        <div class="fld"><div class="d-flex align-items-center">Memory Voltage,&nbsp;<small>mV</small><span class="inf">i</span></div><div class="mono">0 0 800 800 800 0</div></div>
        <div class="fld"><div class="d-flex align-items-center">Fan,&nbsp;<small>%</small><span class="inf">i</span></div><div class="mono">50 100 100 100 100 100</div></div>
        <div class="fld"><div class="d-flex align-items-center">Power Limit,&nbsp;<small>W</small><span class="inf">i</span></div></div>
        <div class="fld"><div class="d-flex align-items-center">SoC Frequency,&nbsp;<small>Mhz</small><span class="inf">i</span></div></div>
        <div class="fld"><div class="d-flex align-items-center">SoC VDDmax,&nbsp;<small>mV</small><span class="inf">i</span></div></div>

        <div class="agg d-flex align-items-center"><div class="tog"><i></i></div>Aggressive undervolting (set OC for each DPM state)</div>
        <div class="tweak">Tweak</div>
        <div class="d-flex justify-content-between align-items-end"><div class="gbox">GPU, index</div><svg width="14" height="17" viewBox="0 0 14 17" fill="none" stroke="#b9bdc5" stroke-width="1.200" style="margin-right:13px"><path d="M0 3.500h14M1 3.500V2h12v1.500M5 2V.6h4V2M1.500 5v11.400h11V5M4.500 7v7.500M7 7v7.500M9.500 7v7.500"/></svg></div>
        <div class="adv d-flex justify-content-between align-items-start"><div class="d-flex align-items-center">Advanced config<span class="inf">i</span></div><span class="rng">GPU 0…GPU 5</span></div>
        <button class="btn addb d-block">Add config</button>
        <div class="foot d-flex justify-content-end align-items-center"><span>Cancel</span><button class="btn saveb">Save</button></div>
      </div>
    </div>

    <div class="tbar d-flex align-items-center">
      <div class="tk"><svg width="16" height="16"><use href="#win"/></svg></div>
      <div class="tk"><svg width="16" height="16"><use href="#srch"/></svg></div>
      <div class="tk run"><svg width="16" height="16"><use href="#fold"/></svg></div>
      <div class="tk"><svg width="16" height="16"><use href="#lg"/></svg></div>
      <div class="tk"><svg width="16" height="16"><use href="#ryz"/></svg></div>
      <div class="tk"><svg width="16" height="16"><use href="#ark"/></svg></div>
      <div class="tk"><svg width="16" height="16" viewBox="0 0 16 16"><circle cx="8" cy="8" r="8" fill="#5865f2"/><use href="#dsc" x="3" y="3" width="10" height="10" color="#fff"/></svg></div>
      <div class="tk cur"><svg width="16" height="16"><use href="#chr"/></svg></div>
      <div class="tk"><svg width="16" height="16"><use href="#stm"/></svg></div>
      <div class="tk"><svg width="16" height="16"><use href="#bnet"/></svg></div>
      <div class="tk"><svg width="16" height="16"><use href="#epic"/></svg></div>
      <div class="tk"><svg width="16" height="16"><use href="#ring"/></svg></div>
      <div class="tk vsp"><svg width="16" height="16"><use href="#vs"/></svg></div>
      <div class="tk vsb"><svg width="16" height="16"><use href="#vs"/></svg></div>
      <div class="tk run"><svg width="16" height="16"><use href="#cd"/></svg></div>
      <div class="tk run"><svg width="16" height="16"><use href="#pcs"/></svg></div>
      <div class="tk grn"><svg width="16" height="16"><use href="#cube"/></svg></div>
      <div class="tk run"><svg width="16" height="16"><use href="#note"/></svg></div>
      <div class="tray d-flex align-items-center ms-auto h-100 seg">
        <svg width="12" height="7" viewBox="0 0 12 7"><path d="M.5 6.500L6 1l5.500 5.500" fill="none" stroke="#fff" stroke-width="1.200"/></svg>
        <svg width="15" height="15"><use href="#lg"/></svg>
        <svg width="16" height="16" viewBox="0 0 16 16" color="#e6e6e6"><use href="#dsc" width="16" height="18"/><circle cx="13" cy="3" r="3" fill="#ee4245"/></svg>
        <svg width="16" height="16"><use href="#stm"/></svg>
        <svg width="16" height="14" viewBox="0 0 16 14" fill="none" stroke="#fff" stroke-width="1.100"><path d="M4 1.500h11.400v9H3V6M6 13.400h7M9.500 10.500v3M.5 1h3v4h-3z"/></svg>
        <svg width="17" height="14" viewBox="0 0 17 14" fill="none" stroke="#fff" stroke-width="1.200"><path d="M.5 4.500H3L6.500 1v12L3 9.500H.5zM9 4.500q1.500 2.500 0 5M11.500 3q2.500 4 0 8"/><path d="M14 1.500q3.500 5.500 0 11" stroke="#777"/></svg>
        <span class="ps-1">CES</span><span class="clk ps-1">22:57</span>
        <svg width="17" height="16" viewBox="0 0 17 16" class="ms-2"><path d="M0 0h17v13h-6l-2.500 3L6 13H0z" fill="#fff"/><path d="M3 4h11M3 6.500h11M3 9h7" stroke="#111" stroke-width="1.200"/></svg>
        <div class="peek"></div>
      </div>
    </div>
  </div>

  <div class="mon-right d-flex flex-column flex-shrink-0">
    <div class="np d-flex flex-column">
      <div class="cap d-flex align-items-center seg"><svg width="16" height="16" style="margin-right:3px"><use href="#note"/></svg>save.txt – Poznámkový blok
        <div class="ms-auto d-flex align-items-center"><div class="wbtn d-flex justify-content-center align-items-center"><svg width="10" height="2"><rect width="10" height="1" fill="#999"/></svg></div><div class="wbtn d-flex justify-content-center align-items-center"><svg width="10" height="10"><use href="#rst"/></svg></div><div class="wbtn d-flex justify-content-center align-items-center"><svg width="10" height="10"><use href="#x"/></svg></div></div></div>
      <div class="menu d-flex"><span>Soubor</span><span>Úpravy</span><span>Formát</span><span>Zobrazení</span><span>Nápověda</span></div>
      <div class="d-flex flex-grow-1">
<pre>1150 1350 1150 1150 1150 1350
0 780 920 920 920 780
1075 1800 1800 1800 1800 1800
0 0 800 800 800 0
50 100 100 100 100 100</pre>
        <div class="vs d-flex flex-column justify-content-between align-items-center"><svg width="9" height="6" viewBox="0 0 9 6"><path d="M.5 5.500l4-4.500 4 4.500" fill="none" stroke="#aaa" stroke-width="1.400"/></svg><svg width="9" height="6" viewBox="0 0 9 6"><path d="M.5.500l4 4.500 4-4.500" fill="none" stroke="#aaa" stroke-width="1.400"/></svg></div>
      </div>
      <div class="hs d-flex justify-content-between align-items-center"><svg width="6" height="9" viewBox="0 0 6 9"><path d="M5.500.5L1 4.500l4.500 4" fill="none" stroke="#aaa" stroke-width="1.400"/></svg><svg width="6" height="9" viewBox="0 0 6 9"><path d="M.5.500L5 4.500l-4.500 4" fill="none" stroke="#aaa" stroke-width="1.400"/></svg></div>
      <div class="stat d-flex justify-content-end"><span class="s1">Řádek 5, Sloupec 23</span><span class="s2">100 %</span><span class="s3">Windows (CRLF)</span><span class="s4">UTF-8</span></div>
    </div>
    <div class="tbar d-flex align-items-center">
      <div class="blank"></div>
      <div class="tk cur"><svg width="16" height="16"><use href="#chr"/></svg></div>
      <div class="tk"><svg width="16" height="16"><use href="#stm"/></svg></div>
      <div class="tk"><svg width="16" height="16"><use href="#bnet"/></svg></div>
      <div class="tk"><svg width="16" height="16"><use href="#epic"/></svg></div>
      <div class="tk"><svg width="16" height="16"><use href="#ring"/></svg></div>
      <div class="tk vsp"><svg width="16" height="16"><use href="#vs"/></svg></div>
      <div class="tk vsb"><svg width="16" height="16"><use href="#vs"/></svg></div>
      <div class="tk run"><svg width="16" height="16"><use href="#cd"/></svg></div>
      <div class="tk run"><svg width="16" height="16"><use href="#pcs"/></svg></div>
      <div class="tk grn"><svg width="16" height="16"><use href="#cube"/></svg></div>
      <div class="tk run"><svg width="16" height="16"><use href="#note"/></svg></div>
      <span class="ms-auto clk" style="padding-right:6px">22:57</span>
    </div>
  </div>
</div>
</body>
</html>
